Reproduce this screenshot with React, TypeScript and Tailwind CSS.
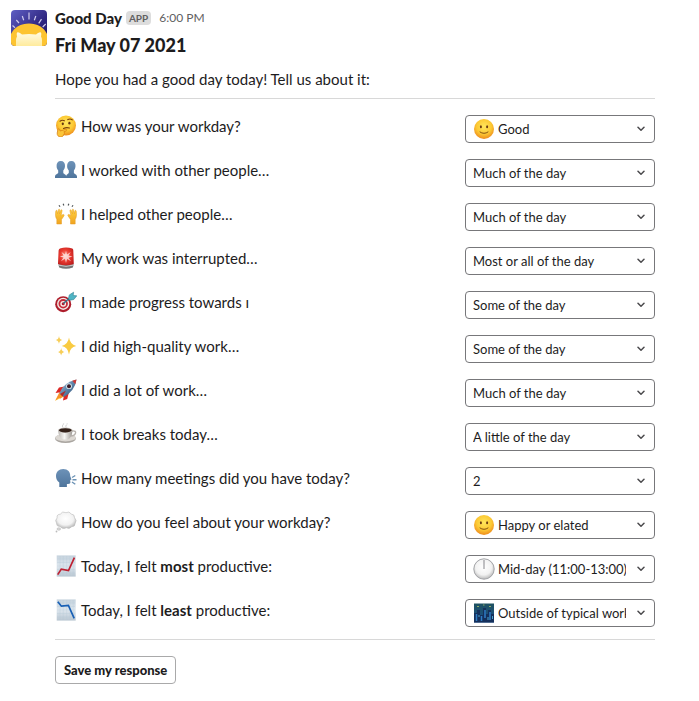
import React, { type ReactNode } from "react";

function Icon({ children }: { children: ReactNode }) {
  return (
    <svg viewBox="0 0 22 22" className="h-[22px] w-[22px] shrink-0" aria-hidden="true">
      {children}
    </svg>
  );
}

function Gradients() {
  return (
    <svg className="absolute h-0 w-0" aria-hidden="true">
      <defs>
        <radialGradient id="face" cx="50%" cy="38%" r="62%">
          <stop offset="0" stopColor="#ffe65c" />
          <stop offset="0.6" stopColor="#fcc934" />
          <stop offset="1" stopColor="#ee8b1c" />
        </radialGradient>
        <linearGradient id="bust" x1="0" y1="0" x2="0" y2="1">
          <stop offset="0" stopColor="#6d92b8" />
          <stop offset="1" stopColor="#4f759c" />
        </linearGradient>
        <linearGradient id="hand" x1="0" y1="0" x2="0" y2="1">
          <stop offset="0" stopColor="#ffd23f" />
          <stop offset="1" stopColor="#f0a321" />
        </linearGradient>
        <radialGradient id="siren" cx="45%" cy="45%" r="65%">
          <stop offset="0" stopColor="#ff8d78" />
          <stop offset="0.5" stopColor="#ea3a30" />
          <stop offset="1" stopColor="#bb1c1c" />
        </radialGradient>
        <radialGradient id="cloud" cx="48%" cy="40%" r="60%">
          <stop offset="0" stopColor="#ffffff" />
          <stop offset="0.65" stopColor="#f2f2f2" />
          <stop offset="1" stopColor="#b9b9b9" />
        </radialGradient>
        <linearGradient id="paper" x1="0" y1="0" x2="0" y2="1">
          <stop offset="0" stopColor="#c6d3de" />
          <stop offset="0.5" stopColor="#dde6ee" />
          <stop offset="1" stopColor="#bac7d2" />
        </linearGradient>
        <linearGradient id="body" x1="0" y1="0" x2="1" y2="1">
          <stop offset="0" stopColor="#a9c4da" />
          <stop offset="0.5" stopColor="#5d86ab" />
          <stop offset="1" stopColor="#28486b" />
        </linearGradient>
        <linearGradient id="cup" x1="0" y1="0" x2="1" y2="0">
          <stop offset="0" stopColor="#bdb9b5" />
          <stop offset="0.45" stopColor="#f7f6f4" />
          <stop offset="1" stopColor="#9d9893" />
        </linearGradient>
        <linearGradient id="sky" x1="0" y1="0" x2="1" y2="1">
          <stop offset="0" stopColor="#5f5fc4" />
          <stop offset="0.6" stopColor="#2f2680" />
          <stop offset="1" stopColor="#21165f" />
        </linearGradient>
        <linearGradient id="cat" x1="0" y1="0" x2="0" y2="1">
          <stop offset="0" stopColor="#fffbe6" />
          <stop offset="1" stopColor="#ffeb9c" />
        </linearGradient>
        <linearGradient id="night" x1="0" y1="0" x2="0" y2="1">
          <stop offset="0" stopColor="#1f5260" />
          <stop offset="1" stopColor="#1a4f8c" />
        </linearGradient>
      </defs>
    </svg>
  );
}

const thinking = (
  <Icon>
    <circle cx="11" cy="10.500" r="10" fill="url(#face)" />
    <path d="M5 6.200Q7.200 4.500 9.400 5.800M12.800 4.600Q15.200 3.200 17.200 4.800" fill="none" stroke="#79420d" strokeWidth="1.100" strokeLinecap="round" />
    <ellipse cx="7.800" cy="8.800" rx="1.100" ry="1.400" fill="#633610" />
    <ellipse cx="14.400" cy="8.200" rx="1.100" ry="1.400" fill="#633610" />
    <path d="M8.500 13.400Q11.500 12 14.400 13" fill="none" stroke="#79420d" strokeWidth="1.100" strokeLinecap="round" />
    <path d="M3 14.200c.7-.8 1.600-.2 1.800.7l.4 1.100 5.600-1.700c1.200-.2 1.500 1.100.4 1.600l-2.400 1c1 .5 1 1.500.2 2-.1 1.800-1.600 3-3.500 3C3.300 21.900 2 20.200 2.200 18Z" fill="#fbc53a" stroke="#d98213" strokeWidth="0.8" />
  </Icon>
);

const people = (
  <Icon>
    <path d="M5.800 2C8.700 2 10.200 4 10 7c0 1.900-.7 3.400-1.700 4.500v2.200c0 1.200 2.700 1.300 3 3.700V19H0v-1.600c.2-2.300 3-2.500 3.200-3.700v-2.200C2.200 10.400 1.600 9 1.600 7 1.500 4 2.900 2 5.800 2Z" fill="url(#bust)" />
    <path d="M16.300 2c2.900 0 4.400 2 4.200 5 0 1.900-.7 3.400-1.600 4.500v2.200c0 1.200 2.900 1.400 3.100 3.700V19H11v-1.600c.2-2.300 2.600-2.500 2.800-3.700v-2.200C12.700 10.400 12.100 9 12.100 7c0-3 1.300-5 4.200-5Z" fill="url(#bust)" />
  </Icon>
);

const raisedHands = (
  <Icon>
    <path d="M4 2.200 5 3.800M8.200.8l.6 1.700M13.800.8l-.6 1.700M18 2.200l-1 1.600" stroke="#52575a" strokeWidth="1.200" />
    <path d="M.8 8c.3-1 1.400-.8 1.400.2l.3 2.500.9-4c.3-.9 1.500-.7 1.400.3l-.3 3.600 1.300-3.300c.4-.8 1.500-.4 1.300.5l-1 4.600 1.900-.9c1-.4 1.500.6.9 1.400l-2.400 3.700V21H1.800v-4.500C.4 14.200.2 11.600.8 8Z" fill="url(#hand)" stroke="#e59a22" strokeWidth="0.5" />
    <path d="M21.200 8c-.3-1-1.400-.8-1.400.2l-.3 2.500-.9-4c-.3-.9-1.500-.7-1.400.3l.3 3.600-1.300-3.300c-.4-.8-1.500-.4-1.300.5l1 4.600-1.900-.9c-1-.4-1.500.6-.9 1.400l2.400 3.700V21h4.700v-4.500c1.400-2.300 1.600-4.900 1-8.500Z" fill="url(#hand)" stroke="#e59a22" strokeWidth="0.5" />
  </Icon>
);

const siren = (
  <Icon>
    <path d="M3.400 17.300h15.300l-.8 3.200Q11 23 4.200 20.500Z" fill="#747475" />
    <path d="M4 18.200q7 2.300 14 0" stroke="#c9c9c9" strokeWidth="1" fill="none" />
    <path d="M5 1.500Q11-.5 17.300 1.500q1 .6 1 2l.5 13.500Q11 19.500 3 17L3.600 3.500q.2-1.500 1.400-2Z" fill="url(#siren)" />
    <path d="m11 3.800 1 3.800L15.700 5l-2.200 3.600 4 .9-4 1.200 2.600 3.500-4-2.300L11 16l-1.100-4.200L6 14.300l2.500-3.700-3.800-1.100 3.900-.9L6.500 5.100 10 7.500Z" fill="#fff" opacity=".7" />
  </Icon>
);

const target = (
  <Icon>
    <circle cx="8.200" cy="13.200" r="8" fill="#ae1e2c" />
    <circle cx="8.200" cy="12.800" r="6.100" fill="#f3ece9" />
    <circle cx="8.200" cy="12.800" r="4.700" fill="#c52b39" />
    <circle cx="8.200" cy="12.800" r="2.900" fill="#f8eee9" />
    <circle cx="8.200" cy="12.800" r="1.500" fill="#b51c30" />
    <path d="m8.400 12.600 9-8.200" stroke="#317688" strokeWidth="1.400" />
    <path d="m13.500 7.500.8-3.600 4.300-2.700-.4 3.300 3.600.3-3 3.700-3.900.7Z" fill="#4fb5c5" stroke="#338293" strokeWidth=".6" />
  </Icon>
);

const sparkles = (
  <Icon>
    <path d="M14 2.500q.8 6.500 7.200 8.400-6.400 1.300-7.200 8.600-.9-7.200-7.200-8.600 6.400-1.900 7.200-8.400Z" fill="#f9cb42" />
    <path d="M4 1q.3 3.300 3.300 4Q4.300 5.500 4 9 3.500 5.500.7 5 3.700 4.300 4 1ZM6.200 13q.3 3.300 3.200 3.900-2.900.6-3.200 3.700-.4-3.100-3.100-3.700Q5.800 16.300 6.200 13Z" fill="#f7ce58" />
  </Icon>
);

const rocket = (
  <Icon>
    <path d="m5 13-4.800 8.800L10 17Z" fill="#ffd63b" />
    <path d="m5 12-4.800 9.800 4-3 1 1 4-3Z" fill="#f57c23" opacity=".75" />
    <path d="M9.500 7.500 4 8.500.5 14l5-.7M14 13.300 12.200 20 8 21.500l1-5.600" fill="#dd2825" />
    <path d="M4.500 14.300Q8 3.500 21.500.5 19.800 12 8.800 17.900Z" fill="url(#body)" />
    <path d="M17.200 1.800 21.500.5l-1.100 4.700Z" fill="#cc3936" />
    <circle cx="14" cy="7.200" r="2.900" fill="#d3e2e9" />
    <circle cx="14" cy="7.200" r="2" fill="#3b1d29" />
    <path d="m5 15 6-3.500-3.500 6Z" fill="#b02a2a" />
  </Icon>
);

const coffee = (
  <Icon>
    <path d="M8 4.500q-1.500-1.600 0-2.700t.3-1.500M11.500 4.500q-1.700-1.500 0-2.600T12 .5" fill="none" stroke="#c9c9c9" strokeWidth=".8" />
    <ellipse cx="10.500" cy="15.500" rx="10.500" ry="4.500" fill="#aaa6a1" />
    <ellipse cx="10.500" cy="14.700" rx="10.300" ry="3.700" fill="#dcd8d3" />
    <path d="M17 8q4.600-.5 3.400 2.500-1 2.500-4.500 2.500" fill="none" stroke="#b8b3ae" strokeWidth="1.400" />
    <path d="M3 7h14.500q-.4 8-4.700 9.500H8.200Q3.500 15 3 7Z" fill="url(#cup)" />
    <ellipse cx="10.300" cy="7.300" rx="7.300" ry="2.700" fill="#c9c4bf" />
    <ellipse cx="10.300" cy="7.300" rx="6.400" ry="2.100" fill="#332019" />
  </Icon>
);

const speaking = (
  <Icon>
    <path d="M8.200 2c4.700 0 7.200 3 7 7l1.300 3.400-1.300.7.200 2.600q-.5 1.600-3.500 1.300V20H4.300v-4.500Q1 13 1 9.200C1 5 3.800 2 8.200 2Z" fill="url(#bust)" />
    <path d="m17 10.500 3.300-2M17.500 12.800h4M17 15l3.300 2.300" stroke="#6a91b4" strokeWidth="1.400" />
  </Icon>
);

const thought = (
  <Icon>
    <path d="M5 15.500Q1.300 15.600 1.500 12-.4 9.300 2.100 7 1.500 3.300 5.300 3.200 7.300-.4 11 1.700q3.300-2 5.200 1.300 3.500.2 3.400 3.800 2.700 2.600.6 5.400 0 3.500-3.500 3.500-2.300 2.800-5.300 1-4 2.200-6.400-1.200Z" fill="url(#cloud)" stroke="#bdbdbd" strokeWidth=".6" />
    <ellipse cx="3.800" cy="18" rx="1.800" ry="1.300" fill="#d8d8d8" stroke="#aaa" strokeWidth=".4" />
    <circle cx="1.500" cy="20.500" r=".9" fill="#bbb" />
  </Icon>
);

function ChartIcon({ down = false }: { down?: boolean }) {
  return (
    <Icon>
      <path d="M1.700.4h19v21.200h-19Z" fill="url(#paper)" />
      <path d="M5 1v20M8.300 1v20M11.600 1v20M14.900 1v20M18.200 1v20M2 4h18M2 7.500h18M2 11h18M2 14.500h18M2 18h18" stroke="#b4c8d7" strokeWidth=".3" />
      {down ? (
        <path d="m2.800 2.700 3.600 4.500 7-.9 5.800 13" fill="none" stroke="#1960b5" strokeWidth="1.700" />
      ) : (
        <path d="m2.700 19.600 3.600-5.500 7.200 1.500 5.900-12.900" fill="none" stroke="#be2031" strokeWidth="1.700" />
      )}
    </Icon>
  );
}

const smile = (
  <Icon>
    <circle cx="11" cy="11" r="10" fill="url(#face)" />
    <ellipse cx="7.900" cy="8.700" rx="1" ry="1.500" fill="#6c3b12" />
    <ellipse cx="14.100" cy="8.700" rx="1" ry="1.500" fill="#6c3b12" />
    <path d="M7 14q4 2.800 8 0" fill="none" stroke="#85500f" strokeWidth="1" strokeLinecap="round" />
  </Icon>
);

const clock = (
  <Icon>
    <circle cx="11" cy="11" r="10.200" fill="url(#cloud)" stroke="#a2a3a7" strokeWidth="1" />
    <path d="M11 11V2" stroke="#85858a" strokeWidth="1" />
  </Icon>
);

const city = (
  <Icon>
    <path d="M1 1.500h20v19H1Z" fill="url(#night)" />
    <path d="M1 11h3V8h3v5h3V6h3v6h2V8h3v4h3v8.500H1Z" fill="#15305c" />
    <path d="M3.500 12v7M8.500 14v5M12 8v8M17 10v8" stroke="#2f7dc5" strokeWidth="1.500" />
    <path d="M6 13v2M15 15v3M19.500 14v3" stroke="#4ba4ca" strokeWidth="1" />
    <path d="M4 4.500h2M10 3h1.500M16 4.500h2" stroke="#8fae68" strokeWidth="1" />
  </Icon>
);

type Question = {
  id: string;
  icon: ReactNode;
  label: ReactNode;
  value: string;
  valueIcon?: ReactNode;
};

const questions: Question[] = [
  { id: "workday", icon: thinking, label: "How was your workday?", value: "Good", valueIcon: smile },
  { id: "worked-with", icon: people, label: "I worked with other people…", value: "Much of the day" },
  { id: "helped", icon: raisedHands, label: "I helped other people…", value: "Much of the day" },
  { id: "interrupted", icon: siren, label: "My work was interrupted…", value: "Most or all of the day" },
  { id: "progress", icon: target, label: "I made progress towards ı", value: "Some of the day" },
  { id: "quality", icon: sparkles, label: "I did high-quality work…", value: "Some of the day" },
  { id: "amount", icon: rocket, label: "I did a lot of work…", value: "Much of the day" },
  { id: "breaks", icon: coffee, label: "I took breaks today…", value: "A little of the day" },
  { id: "meetings", icon: speaking, label: "How many meetings did you have today?", value: "2" },
  { id: "feeling", icon: thought, label: "How do you feel about your workday?", value: "Happy or elated", valueIcon: smile },
  { id: "most", icon: <ChartIcon />, label: <>Today, I felt <b>most</b> productive:</>, value: "Mid-day (11:00-13:00)", valueIcon: clock },
  { id: "least", icon: <ChartIcon down />, label: <>Today, I felt <b>least</b> productive:</>, value: "Outside of typical work hours", valueIcon: city },
];

function QuestionRow({ id, icon, label, value, valueIcon }: Question) {
  return (
    <div className="flex items-start justify-between gap-4">
      <label htmlFor={id} className="flex items-center gap-1 text-[15px] leading-[22px]">
        {icon}
        <span>{label}</span>
      </label>
      <div className="relative w-[190px] shrink-0">
        <select
          id={id}
          defaultValue={value}
          className={`block h-7 w-full appearance-none rounded border border-[#77777a] bg-white pr-7 pt-[2px] text-[13px] text-[#1d1c1d] ${valueIcon ? "pl-8" : "pl-[7px]"}`}
        >
          <option>{value}</option>
        </select>
        {valueIcon && <span className="pointer-events-none absolute left-2 top-[3px]">{valueIcon}</span>}
        <svg viewBox="0 0 8 6" className="pointer-events-none absolute right-[10px] top-[11px] h-[6px] w-2" aria-hidden="true">
          <path d="m1 1.200 3 3L7 1.200" fill="none" stroke="#4b4a4d" strokeWidth="1.500" strokeLinecap="round" strokeLinejoin="round" />
        </svg>
      </div>
    </div>
  );
}

function Avatar() {
  return (
    <svg viewBox="0 0 36 36" className="h-9 w-9 shrink-0 rounded" role="img" aria-label="Good Day">
      <path d="M0 0h36v36H0Z" fill="url(#sky)" />
      <path d="M1.500 15.500 4 17.800M5.300 10 8 13M11.300 6l1.400 4.200M18 2.500v7M24.800 6l-1.500 4.200M30.500 9.200l-2.800 4.200M34.700 14l-3 3" stroke="#cfcaec" strokeWidth="1.200" />
      <path d="M0 24C3 17.500 10 13.500 18 13.500S33 17.500 36 24v12H0Z" fill="#fdc431" />
      <path d="M5 36v-6q0-2 1-3.500-.9-4.500 1-4.300 2 .2 4 2.300 7-1 14 0 2-2.100 4-2.300 1.900-.2 1 4.300 1 1.500 1 3.500v6Z" fill="url(#cat)" />
    </svg>
  );
}

export default function App() {
  return (
    <main className="flex min-h-screen items-start gap-2 bg-white pb-4 pl-[11px] pr-11 pt-[10px] font-['Lato',sans-serif] text-[#1d1c1d]">
      <Gradients />
      <Avatar />
      <form className="min-w-0 flex-1" onSubmit={(event) => event.preventDefault()}>
        <header className="flex h-4 items-center text-[15px]">
          <span className="font-black">Good Day</span>
          <span className="ml-1 rounded-sm bg-[#dddddd] px-[3px] text-[10px] font-bold leading-[14px] text-[#616061]">APP</span>
          <time className="ml-2 text-xs text-[#616061]">6:00 PM</time>
        </header>
        <h1 className="mt-[7px] text-lg font-black leading-6">Fri May 07 2021</h1>
        <p className="mt-[10px] text-[15px] leading-6">Hope you had a good day today! Tell us about it:</p>
        <hr className="mb-4 mt-[7px] border-[#d8d8d8]" />
        <div className="flex flex-col gap-4">
          {questions.map((question) => (
            <QuestionRow key={question.id} {...question} />
          ))}
        </div>
        <hr className="mb-4 mt-3 border-[#d8d8d8]" />
        <button type="submit" className="h-7 rounded border border-[#a9a9aa] bg-white px-2 pt-[2px] text-[13px] font-black">
          Save my response
        </button>
      </form>
    </main>
  );
}
